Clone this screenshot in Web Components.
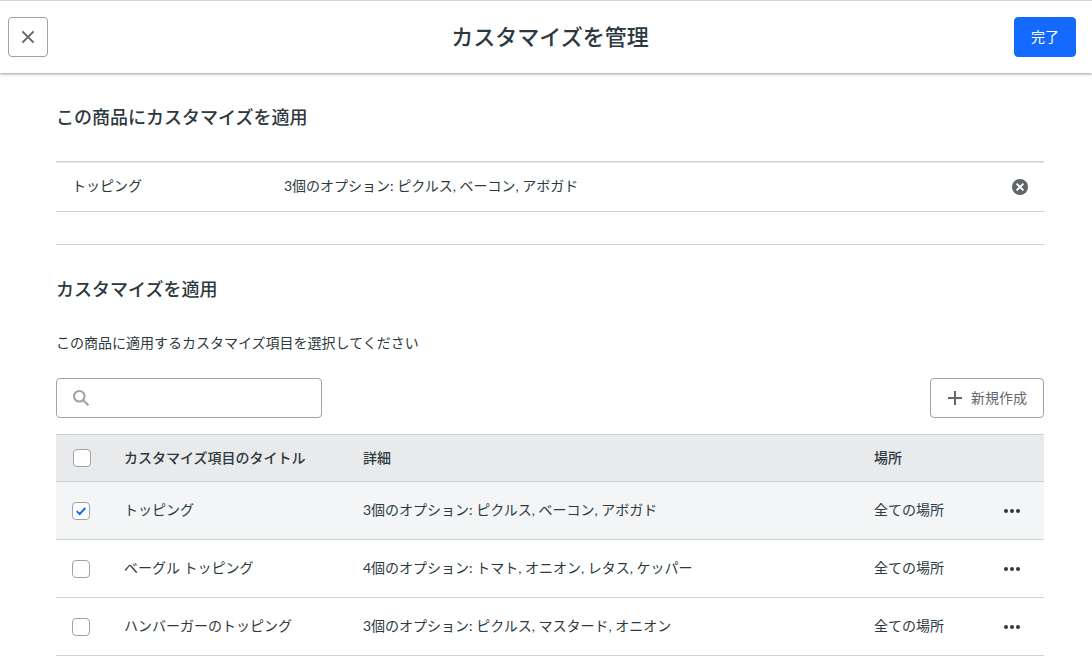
<!DOCTYPE html>
<html lang="ja">
<head>
<meta charset="utf-8">
<meta name="viewport" content="width=device-width, initial-scale=1">
<title>カスタマイズを管理</title>
<style>
  :root {
    --ink: #2d3940;
    --muted: #62696e;
    --line: #cdd2d4;
    --control-line: #9da3a8;
    --blue: #146aff;
    --head-bg: #e8eaec;
    --selected-bg: #f3f5f7;
  }
  body {
    margin: 0;
    background: #fff;
    color: var(--ink);
    font: 14px/24px Lato, "Noto Sans CJK JP", sans-serif;
  }
</style>
</head>
<body>
<customize-page></customize-page>

<script>
class BaseElement extends HTMLElement {
  connectedCallback() {
    if (this.shadowRoot) return;
    this.attachShadow({ mode: 'open' }).innerHTML =
      '<style>*,*::before{box-sizing:border-box}</style>' + this.render();
  }
}

/* Push button: variants "outline" (default) and "primary"; "square" for icon only. */
class UiButton extends BaseElement {
  render() {
    const label = this.getAttribute('label');
    return `
      <style>
        :host { display: block; }
        button {
          display: flex; align-items: center; justify-content: center; gap: 8px;
          height: 40px; margin: 0; padding: 0 16px;
          border: 1px solid var(--control-line); border-radius: 4px;
          background: #fff; color: var(--muted);
          font: inherit; white-space: nowrap; cursor: pointer;
        }
        :host([variant="primary"]) button {
          border-color: var(--blue); background: var(--blue); color: #fff;
        }
        :host([square]) button { width: 40px; padding: 0; }
        ::slotted(svg) { display: block; flex: none; }
      </style>
      <button type="button"${label ? ` aria-label="${label}"` : ''}><slot></slot></button>`;
  }
}
customElements.define('ui-button', UiButton);

/* Borderless button holding a single icon. */
class IconButton extends BaseElement {
  render() {
    return `
      <style>
        :host { display: inline-block; vertical-align: middle; }
        button {
          display: block; margin: 0; padding: 0; border: 0;
          background: none; color: inherit; cursor: pointer;
        }
        ::slotted(svg) { display: block; }
      </style>
      <button type="button" aria-label="${this.getAttribute('label')}"><slot></slot></button>`;
  }
}
customElements.define('icon-button', IconButton);

class CheckBox extends BaseElement {
  render() {
    return `
      <style>
        :host { display: inline-block; vertical-align: middle; }
        label { display: grid; width: 18px; height: 18px; }
        input, svg { grid-area: 1 / 1; }
        input {
          appearance: none; width: 18px; height: 18px; margin: 0;
          border: 1px solid var(--control-line); border-radius: 4px; background: #fff;
        }
        svg { visibility: hidden; pointer-events: none; }
        input:checked + svg { visibility: visible; }
      </style>
      <label>
        <input type="checkbox" aria-label="${this.getAttribute('label')}"${this.hasAttribute('checked') ? ' checked' : ''}>
        <svg width="18" height="18" viewBox="0 0 18 18" fill="none" stroke="var(--blue)" stroke-width="2"><path d="M4.7 9.1l3 2.9 5.6-6"/></svg>
      </label>`;
  }
}
customElements.define('check-box', CheckBox);

class SearchField extends BaseElement {
  render() {
    return `
      <style>
        :host { display: block; width: 266px; }
        label {
          display: flex; align-items: center; gap: 16px; height: 40px; padding: 0 16px;
          border: 1px solid var(--control-line); border-radius: 4px; background: #fff;
        }
        svg { flex: none; }
        input {
          flex: 1; min-width: 0; height: 24px; padding: 0; border: 0; outline: 0;
          background: none; color: inherit; font: inherit;
        }
      </style>
      <label>
        <svg width="16" height="16" viewBox="0 0 16 16" fill="none" stroke="#9da3a6" stroke-width="2"><circle cx="6.3" cy="6.3" r="5.3"/><path d="M10.2 10.2l5.2 5.2"/></svg>
        <input type="text" aria-label="検索">
      </label>`;
  }
}
customElements.define('search-field', SearchField);

class PageHeader extends BaseElement {
  render() {
    return `
      <style>
        :host { display: block; }
        header {
          display: grid; grid-template-columns: 1fr auto 1fr; align-items: center;
          padding: 16px 16px 16px 24px; border-top: 1px solid #d5d6d7;
          box-shadow: 0 1px 3px rgba(0, 0, 0, .4);
        }
        .start { margin-left: -16px; }
        .end { justify-self: end; }
        h1 { margin: 0; font-size: 22px; line-height: 32px; font-weight: 500; }
      </style>
      <header>
        <div class="start"><slot name="start"></slot></div>
        <h1><slot></slot></h1>
        <div class="end"><slot name="end"></slot></div>
      </header>`;
  }
}
customElements.define('page-header', PageHeader);

class PageSection extends BaseElement {
  render() {
    return `
      <style>
        :host { display: block; }
        h2 { margin: 0; padding: 28px 0; font-size: 18px; line-height: 32px; font-weight: 500; }
      </style>
      <section><h2>${this.getAttribute('heading')}</h2><slot></slot></section>`;
  }
}
customElements.define('page-section', PageSection);

const tableStyle = `
  :host { display: block; }
  table { width: 100%; table-layout: fixed; border-collapse: separate; border-spacing: 0; }
  th, td { padding: 0 16px; border-bottom: 1px solid var(--line); text-align: left; font-weight: 400; }
  tbody th, tbody td { padding-bottom: 2px; }
  svg { display: block; }`;

const applied = [
  { title: 'トッピング', detail: '3個のオプション: ピクルス, ベーコン, アボガド' },
];

class AppliedTable extends BaseElement {
  render() {
    return `
      <style>${tableStyle}
        table { border-top: 1px solid var(--line); }
        tbody { box-shadow: inset 0 1px #e3e7e8; }
        th, td { height: 50px; }
        .title { width: 212px; }
        .action { width: 48px; }
        icon-button { color: #5f666b; }
      </style>
      <table><tbody>${applied.map(r => `
        <tr>
          <th class="title" scope="row">${r.title}</th>
          <td>${r.detail}</td>
          <td class="action"><icon-button label="${r.title}を削除"><svg width="16" height="16" viewBox="0 0 16 16"><circle cx="8" cy="8" r="8" fill="currentColor"/><path d="M4.6 4.6l6.8 6.8M11.4 4.6l-6.8 6.8" stroke="#fff" stroke-width="2"/></svg></icon-button></td>
        </tr>`).join('')}
      </tbody></table>`;
  }
}
customElements.define('applied-table', AppliedTable);

const options = [
  { title: 'トッピング', detail: '3個のオプション: ピクルス, ベーコン, アボガド', place: '全ての場所', selected: true },
  { title: 'ベーグル トッピング', detail: '4個のオプション: トマト, オニオン, レタス, ケッパー', place: '全ての場所' },
  { title: 'ハンバーガーのトッピング', detail: '3個のオプション: ピクルス, マスタード, オニオン', place: '全ての場所' },
];

class OptionsTable extends BaseElement {
  render() {
    return `
      <style>${tableStyle}
        thead th { height: 48px; border-top: 1px solid var(--line); background: var(--head-bg); font-weight: 500; }
        tbody th, tbody td { height: 58px; }
        .selected { background: var(--selected-bg); }
        .check { width: 52px; padding: 0 17px; }
        .check check-box { display: block; }
        .title { width: 239px; }
        .place { width: 130px; }
        .action { width: 56px; }
      </style>
      <table>
        <thead><tr>
          <th class="check"><check-box label="すべて選択"></check-box></th>
          <th class="title" scope="col">カスタマイズ項目のタイトル</th>
          <th scope="col">詳細</th>
          <th class="place" scope="col">場所</th>
          <th class="action"></th>
        </tr></thead>
        <tbody>${options.map(r => `
          <tr${r.selected ? ' class="selected"' : ''}>
            <td><check-box label="${r.title}"${r.selected ? ' checked' : ''}></check-box></td>
            <th scope="row">${r.title}</th>
            <td>${r.detail}</td>
            <td>${r.place}</td>
            <td><icon-button label="${r.title}のメニュー"><svg width="16" height="16" viewBox="0 0 16 16" fill="currentColor"><circle cx="2" cy="8" r="2"/><circle cx="8" cy="8" r="2"/><circle cx="14" cy="8" r="2"/></svg></icon-button></td>
          </tr>`).join('')}
        </tbody>
      </table>`;
  }
}
customElements.define('options-table', OptionsTable);

class CustomizePage extends BaseElement {
  render() {
    return `
      <style>
        :host { display: block; }
        main { padding: 0 48px 0 56px; }
        .first { border-bottom: 1px solid var(--line); padding-bottom: 32px; }
        p { margin: 0; line-height: 20px; padding-bottom: 25px; }
        .tools { display: flex; align-items: center; justify-content: space-between; padding-bottom: 16px; }
      </style>
      <page-header>
        <ui-button slot="start" square label="閉じる"><svg width="14" height="14" viewBox="0 0 14 14" fill="none" stroke="currentColor" stroke-width="2"><path d="M1.4 1.4l11.2 11.2M12.6 1.4L1.4 12.6"/></svg></ui-button>
        カスタマイズを管理
        <ui-button slot="end" variant="primary">完了</ui-button>
      </page-header>
      <main>
        <page-section class="first" heading="この商品にカスタマイズを適用">
          <applied-table></applied-table>
        </page-section>
        <page-section heading="カスタマイズを適用">
          <p>この商品に適用するカスタマイズ項目を選択してください</p>
          <div class="tools">
            <search-field></search-field>
            <ui-button><svg width="16" height="16" viewBox="0 0 16 16" fill="none" stroke="currentColor" stroke-width="2"><path d="M8 1v14M1 8h14"/></svg>新規作成</ui-button>
          </div>
          <options-table></options-table>
        </page-section>
      </main>`;
  }
}
customElements.define('customize-page', CustomizePage);
</script>
</body>
</html>
